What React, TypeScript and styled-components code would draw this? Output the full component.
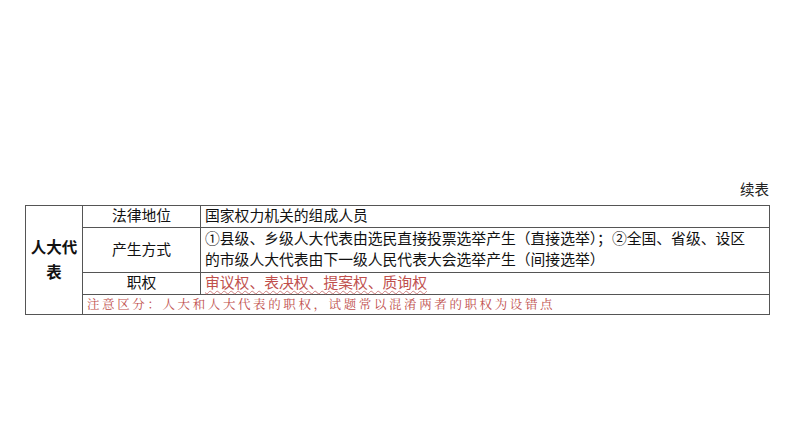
import React from "react";
import styled, { createGlobalStyle } from "styled-components";

const GlobalStyle = createGlobalStyle`
  html, body {
    margin: 0;
    padding: 0;
    background: #ffffff;
  }
  body {
    font-family: "Liberation Sans", "Noto Sans CJK SC", sans-serif;
    color: #111111;
  }
`;

const Page = styled.div`
  width: 794px;
  height: 447px;
  padding: 180px 0 0 25px;
  box-sizing: border-box;
`;

const Sheet = styled.div`
  width: 745px;
`;

const Caption = styled.div`
  text-align: right;
  font-size: 14.5px;
  line-height: 20px;
  height: 25px;
  padding-right: 1px;
  color: #222222;
`;

const Table = styled.table`
  width: 745px;
  border-collapse: collapse;
  table-layout: fixed;
  border: 1.5px solid #444444;
  font-size: 14.8px;
`;

const Row = styled.tr<{ h: number }>`
  height: ${p => p.h}px;
`;

const Cell = styled.td<{ align?: "left" | "center" }>`
  border: 1px solid #555555;
  padding: 0 4px;
  text-align: ${p => p.align ?? "left"};
  vertical-align: middle;
  line-height: 21px;
  white-space: nowrap;
  overflow: visible;
`;

const HeadCell = styled(Cell)`
  font-weight: bold;
  font-size: 15.5px;
  white-space: normal;
  padding: 0 2px;
  line-height: 25px;
`;

const Powers = styled.span`
  color: #c0504d;
  text-decoration: underline wavy #d08080;
  text-decoration-thickness: 1px;
  text-underline-offset: 2px;
`;

const Note = styled(Cell)`
  font-family: "Noto Serif CJK SC", "AR PL UKai CN", "Noto Sans CJK SC", serif;
  font-size: 12.5px;
  letter-spacing: 2.6px;
  color: #c0504d;
  line-height: 19px;
`;

export default function App() {
  return (
    <>
      <GlobalStyle />
      <Page>
        <Sheet>
          <Caption>续表</Caption>
          <Table>
            <colgroup>
              <col style={{ width: 57 }} />
              <col style={{ width: 118 }} />
              <col />
            </colgroup>
            <tbody>
              <Row h={21}>
                <HeadCell rowSpan={4} align="center">
                  人大代表
                </HeadCell>
                <Cell align="center">法律地位</Cell>
                <Cell>国家权力机关的组成人员</Cell>
              </Row>
              <Row h={45}>
                <Cell align="center">产生方式</Cell>
                <Cell>
                  ①县级、乡级人大代表由选民直接投票选举产生（直接选举）；②全国、省级、设区
                  <br />
                  的市级人大代表由下一级人民代表大会选举产生（间接选举）
                </Cell>
              </Row>
              <Row h={21}>
                <Cell align="center">职权</Cell>
                <Cell>
                  <Powers>审议权、表决权、提案权、质询权</Powers>
                </Cell>
              </Row>
              <Row h={20}>
                <Note colSpan={2}>
                  注意区分：人大和人大代表的职权，试题常以混淆两者的职权为设错点
                </Note>
              </Row>
            </tbody>
          </Table>
        </Sheet>
      </Page>
    </>
  );
}
